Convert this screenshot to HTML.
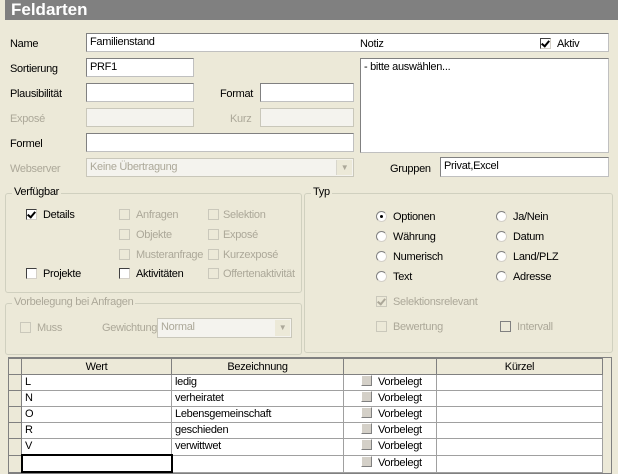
<!DOCTYPE html><html><head><style>
body{margin:0;width:618px;height:474px;background:#ece9d8;font-family:"Liberation Sans",sans-serif;font-size:11px;letter-spacing:-0.3px;color:#000;position:relative;overflow:hidden}
.a{position:absolute;white-space:nowrap}
.hd{left:5px;top:0;width:613px;height:20px;background:#808080;color:#fff;font-weight:bold;font-size:17px;letter-spacing:0;line-height:20px;padding-left:6px;box-sizing:border-box}
.in{position:absolute;background:#fff;border:1px solid #c0c0c0;border-top-color:#808080;border-left-color:#808080;box-sizing:border-box;padding-left:3px;line-height:17px;white-space:nowrap}
.dis{background:#f4f3ee;border-color:#c9c7ba;color:#aca899}
.g{color:#aca899}
.gb{position:absolute;border:1px solid #d0d0bf;border-radius:3px}
.gb span{position:absolute;top:-8px;left:6px;background:#ece9d8;padding:0 2px}
.cb{position:absolute;width:11px;height:11px;border:1px solid #404040;border-right-color:#d4d0c8;border-bottom-color:#d4d0c8;background:#fff;box-sizing:border-box}
.cb.d{border-color:#cac8bb;background:#ece9d8}
.ck::after{content:"";position:absolute;left:2px;top:0px;width:3px;height:6px;border:solid #000;border-width:0 2px 2px 0;transform:rotate(40deg)}
.cb.d.ck::after{border-color:#aca899}
.rd{position:absolute;width:11px;height:11px;border-radius:50%;border:1px solid #808080;border-right-color:#d4d0c8;border-bottom-color:#d4d0c8;background:#fff;box-sizing:border-box}
.rd.on::after{content:"";position:absolute;left:3px;top:3px;width:3px;height:3px;border-radius:50%;background:#000}
table{border-collapse:collapse;position:absolute;left:8px;top:358px;background:#fff}
td{border:1px solid #a0a0a0;height:15px;padding:0 0 0 3px;font-size:11px;line-height:15px;white-space:nowrap}
th{border:1px solid #808080;background:#ece9d8;font-weight:normal;height:15px;padding:0;font-size:11px}
td.rh{background:#ece9d8;border-color:#808080;width:10px;padding:0}
.mini{display:inline-block;width:9px;height:9px;background:#d4d0c8;border:1px solid #fff;border-right-color:#808080;border-bottom-color:#808080;vertical-align:-1px;margin:0 6px 0 14px}
</style></head><body>
<div class="a hd">Feldarten</div>
<div class="a" style="left:10px;top:38px">Name</div>
<div class="in" style="left:86px;top:33px;width:523px;height:19px">Familienstand</div>
<div class="a" style="left:360px;top:38px">Notiz</div>
<div class="cb ck" style="left:540px;top:38px"></div>
<div class="a" style="left:557px;top:38px">Aktiv</div>
<div class="a" style="left:10px;top:63px">Sortierung</div>
<div class="in" style="left:86px;top:58px;width:108px;height:19px">PRF1</div>
<div class="in" style="left:360px;top:58px;width:249px;height:95px;line-height:14px;padding-top:1px">- bitte auswählen...</div>
<div class="a" style="left:10px;top:88px">Plausibilität</div>
<div class="in" style="left:86px;top:83px;width:108px;height:19px"></div>
<div class="a" style="left:220px;top:88px">Format</div>
<div class="in" style="left:260px;top:83px;width:94px;height:19px"></div>
<div class="a g" style="left:10px;top:113px">Exposé</div>
<div class="in dis" style="left:86px;top:108px;width:108px;height:19px"></div>
<div class="a g" style="left:230px;top:113px">Kurz</div>
<div class="in dis" style="left:260px;top:108px;width:94px;height:19px"></div>
<div class="a" style="left:10px;top:138px">Formel</div>
<div class="in" style="left:86px;top:133px;width:268px;height:19px"></div>
<div class="a g" style="left:10px;top:163px">Webserver</div>
<div class="in dis" style="left:86px;top:158px;width:268px;height:19px">Keine Übertragung<div class="a" style="right:1px;top:1px;width:15px;height:15px;background:#ece9d8;border-left:1px solid #d8d6cc;text-align:center;font-size:8px;line-height:15px">▼</div></div>
<div class="a" style="left:390px;top:163px">Gruppen</div>
<div class="in" style="left:440px;top:157px;width:169px;height:20px">Privat,Excel</div>

<div class="gb" style="left:5px;top:193px;width:295px;height:98px"><span>Verfügbar</span></div>
<div class="cb ck" style="left:26px;top:209px"></div><div class="a" style="left:43px;top:209px">Details</div>
<div class="cb d" style="left:119px;top:209px"></div><div class="a g" style="left:136px;top:209px">Anfragen</div>
<div class="cb d" style="left:208px;top:209px"></div><div class="a g" style="left:223px;top:209px">Selektion</div>
<div class="cb d" style="left:119px;top:229px"></div><div class="a g" style="left:136px;top:229px">Objekte</div>
<div class="cb d" style="left:208px;top:229px"></div><div class="a g" style="left:223px;top:229px">Exposé</div>
<div class="cb d" style="left:119px;top:249px"></div><div class="a g" style="left:136px;top:249px">Musteranfrage</div>
<div class="cb d" style="left:208px;top:249px"></div><div class="a g" style="left:223px;top:249px">Kurzexposé</div>
<div class="cb" style="left:26px;top:268px"></div><div class="a" style="left:43px;top:268px">Projekte</div>
<div class="cb" style="left:119px;top:268px"></div><div class="a" style="left:136px;top:268px">Aktivitäten</div>
<div class="cb d" style="left:208px;top:268px"></div><div class="a g" style="left:223px;top:268px">Offertenaktivität</div>

<div class="gb" style="left:5px;top:303px;width:295px;height:50px"><span class="g">Vorbelegung bei Anfragen</span></div>
<div class="cb d" style="left:20px;top:322px"></div><div class="a g" style="left:37px;top:322px">Muss</div>
<div class="a g" style="left:102px;top:322px">Gewichtung</div>
<div class="in dis" style="left:157px;top:318px;width:135px;height:20px">Normal<div class="a" style="right:1px;top:1px;width:15px;height:16px;background:#ece9d8;text-align:center;font-size:8px;line-height:16px">▼</div></div>

<div class="gb" style="left:304px;top:193px;width:307px;height:158px"><span>Typ</span></div>
<div class="rd on" style="left:376px;top:211px"></div><div class="a" style="left:393px;top:211px">Optionen</div>
<div class="rd" style="left:376px;top:231px"></div><div class="a" style="left:393px;top:231px">Währung</div>
<div class="rd" style="left:376px;top:251px"></div><div class="a" style="left:393px;top:251px">Numerisch</div>
<div class="rd" style="left:376px;top:271px"></div><div class="a" style="left:393px;top:271px">Text</div>
<div class="rd" style="left:496px;top:211px"></div><div class="a" style="left:513px;top:211px">Ja/Nein</div>
<div class="rd" style="left:496px;top:231px"></div><div class="a" style="left:513px;top:231px">Datum</div>
<div class="rd" style="left:496px;top:251px"></div><div class="a" style="left:513px;top:251px">Land/PLZ</div>
<div class="rd" style="left:496px;top:271px"></div><div class="a" style="left:513px;top:271px">Adresse</div>
<div class="cb d ck" style="left:376px;top:296px"></div><div class="a g" style="left:393px;top:296px">Selektionsrelevant</div>
<div class="cb d" style="left:376px;top:321px"></div><div class="a g" style="left:393px;top:321px">Bewertung</div>
<div class="cb d" style="left:500px;top:321px;border-color:#808080"></div><div class="a g" style="left:517px;top:321px">Intervall</div>

<div class="a" style="left:8px;top:357px;width:604px;height:117px;background:#ece9d8;border:1px solid #808080;box-sizing:border-box"></div>
<table>
<tr><th style="width:12px"></th><th style="width:149px">Wert</th><th style="width:171px">Bezeichnung</th><th style="width:92px"></th><th style="width:165px">Kürzel</th></tr>
<tr><td class="rh"></td><td>L</td><td>ledig</td><td><span class="mini"></span>Vorbelegt</td><td></td></tr>
<tr><td class="rh"></td><td>N</td><td>verheiratet</td><td><span class="mini"></span>Vorbelegt</td><td></td></tr>
<tr><td class="rh"></td><td>O</td><td>Lebensgemeinschaft</td><td><span class="mini"></span>Vorbelegt</td><td></td></tr>
<tr><td class="rh"></td><td>R</td><td>geschieden</td><td><span class="mini"></span>Vorbelegt</td><td></td></tr>
<tr><td class="rh"></td><td>V</td><td>verwittwet</td><td><span class="mini"></span>Vorbelegt</td><td></td></tr>
<tr><td class="rh"></td><td style="border:2px solid #000"></td><td></td><td><span class="mini"></span>Vorbelegt</td><td></td></tr>
</table>
</body></html>
